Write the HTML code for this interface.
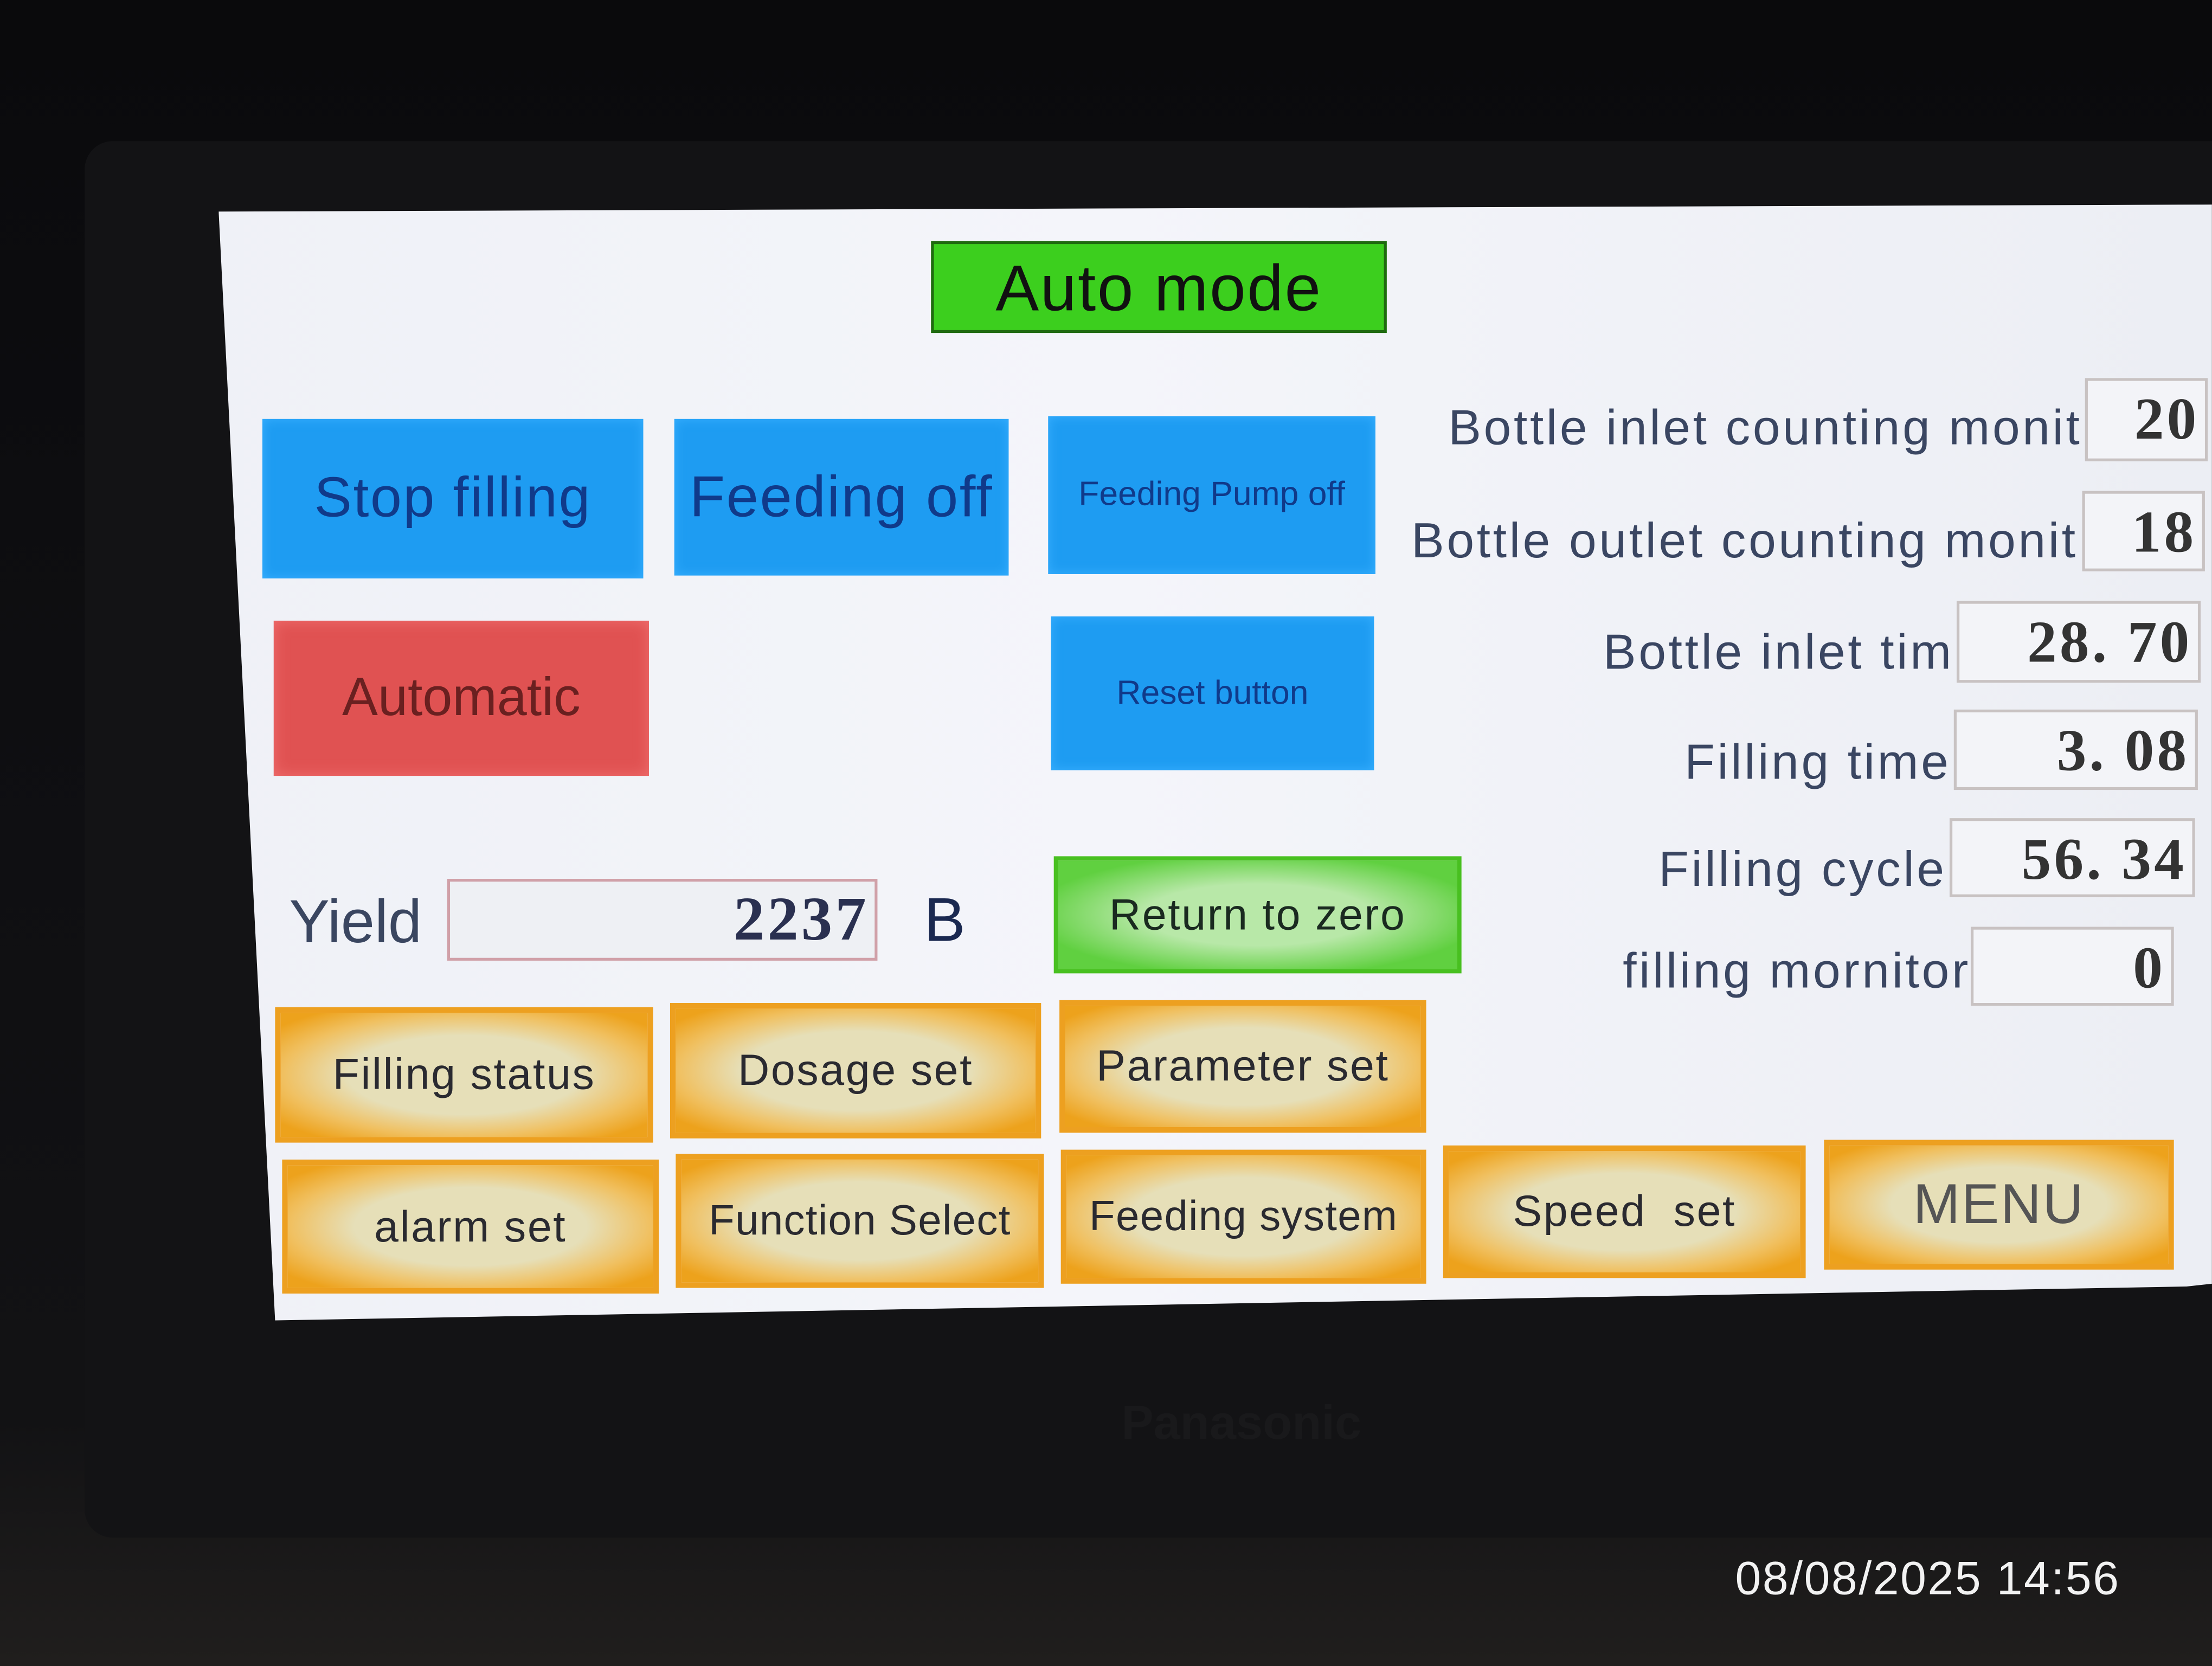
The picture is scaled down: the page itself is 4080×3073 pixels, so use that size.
<!DOCTYPE html>
<html><head><meta charset="utf-8"><style>
html,body{margin:0;padding:0;width:4080px;height:3072px;overflow:hidden;background:#0c0c0e}
#w{position:absolute;left:0;top:0;width:1568px;height:1181px;transform:scale(2.602);transform-origin:0 0;font-family:"Liberation Sans",sans-serif;
background:linear-gradient(180deg,#0a0a0c 0%,#0e0e11 40%,#121214 85%,#201e1d 100%)}
.bez{position:absolute;left:60px;top:100px;width:1540px;height:990px;background:#131315;border-radius:20px}
.scr{position:absolute;left:0;top:0;width:1568px;height:1181px;background:linear-gradient(90deg,#eef0f6,#f4f5fa 50%,#eceef4);
clip-path:polygon(155px 150px,1568px 145px,1568px 910px,1550px 912px,195px 936px)}
.a{position:absolute;box-sizing:border-box}
.bl{background:#1e9cf2;box-shadow:inset 0 0 8px #3ab0ff;color:#103a8a;display:flex;align-items:center;justify-content:center}
.or{background:radial-gradient(ellipse at center,#e6dfb8 45%,#f0c060 70%,#eda21c 90%);border:4px solid #eda020;color:#2a2a30;display:flex;align-items:center;justify-content:center;font-size:31px;letter-spacing:1px;white-space:nowrap}
.lb{position:absolute;text-align:right;color:#3a4662;font-size:35px;letter-spacing:1.8px;white-space:nowrap}
.bx{position:absolute;box-sizing:border-box;border:2px solid #c8c2c2;background:#f3f4f8;text-align:right;font-family:"Liberation Serif",serif;font-weight:bold;color:#333;font-size:42px;letter-spacing:2px;padding-right:4px;line-height:56px}
</style></head><body><div id="w">
<div class="bez"></div>
<div class="scr"></div>
<div class="a" style="left:660px;top:171px;width:323px;height:65px;background:#3ccf1e;border:2px solid #1f6a10;font-size:46px;letter-spacing:1px;color:#111;text-align:center;line-height:62px">Auto mode</div>
<div class="a bl" style="left:186px;top:297px;width:270px;height:113px;font-size:40px;letter-spacing:1px">Stop filling</div>
<div class="a bl" style="left:478px;top:297px;width:237px;height:111px;font-size:41px;letter-spacing:1px">Feeding off</div>
<div class="a bl" style="left:743px;top:295px;width:232px;height:112px;font-size:24px">Feeding Pump off</div>
<div class="a" style="left:194px;top:440px;width:266px;height:110px;background:#e05252;box-shadow:inset 0 0 10px #f07070;color:#6a2020;font-size:38px;display:flex;align-items:center;justify-content:center">Automatic</div>
<div class="a bl" style="left:745px;top:437px;width:229px;height:109px;font-size:24px">Reset button</div>
<div class="a" style="left:205px;top:630px;font-size:43px;color:#3a4660">Yield</div>
<div class="a" style="left:317px;top:623px;width:305px;height:58px;border:2px solid #d0a0a8;background:#eef0f4;text-align:right;font-family:'Liberation Serif',serif;font-weight:bold;font-size:44px;letter-spacing:2px;color:#2a3050;padding-right:4px;line-height:54px">2237</div>
<div class="a" style="left:655px;top:628px;font-size:44px;color:#1a2850">B</div>
<div class="a" style="left:747px;top:607px;width:289px;height:83px;background:radial-gradient(ellipse at center,#b8e8a8 40%,#60d040 80%);border:3px solid #48c020;font-size:31px;letter-spacing:1px;color:#1a2a20;display:flex;align-items:center;justify-content:center">Return to zero</div>
<div class="a or" style="left:195px;top:714px;width:268px;height:96px">Filling status</div>
<div class="a or" style="left:475px;top:711px;width:263px;height:96px">Dosage set</div>
<div class="a or" style="left:751px;top:709px;width:260px;height:94px">Parameter set</div>
<div class="a or" style="left:200px;top:822px;width:267px;height:95px">alarm set</div>
<div class="a or" style="left:479px;top:818px;width:261px;height:95px;font-size:30px;letter-spacing:0.5px">Function Select</div>
<div class="a or" style="left:752px;top:815px;width:259px;height:95px;font-size:30px;letter-spacing:0.5px">Feeding system</div>
<div class="a or" style="left:1023px;top:812px;width:257px;height:94px">Speed&nbsp; set</div>
<div class="a or" style="left:1293px;top:808px;width:248px;height:92px;font-size:40px;color:#555">MENU</div>
<div class="lb" style="right:92px;top:284px">Bottle inlet counting monit</div>
<div class="bx" style="left:1478px;top:268px;width:87px;height:59px">20</div>
<div class="lb" style="right:95px;top:364px">Bottle outlet counting monit</div>
<div class="bx" style="left:1476px;top:348px;width:87px;height:57px">18</div>
<div class="lb" style="right:183px;top:443px">Bottle inlet tim</div>
<div class="bx" style="left:1387px;top:426px;width:173px;height:58px">28. 70</div>
<div class="lb" style="right:185px;top:521px">Filling time</div>
<div class="bx" style="left:1385px;top:503px;width:173px;height:57px">3. 08</div>
<div class="lb" style="right:188px;top:597px">Filling cycle</div>
<div class="bx" style="left:1382px;top:580px;width:174px;height:56px">56. 34</div>
<div class="lb" style="right:171px;top:669px">filling mornitor</div>
<div class="bx" style="left:1397px;top:657px;width:144px;height:56px">0</div>
<div class="a" style="left:795px;top:990px;font-size:34px;font-weight:bold;color:#19191b">Panasonic</div>
<div class="a" style="left:1230px;top:1100px;font-size:33px;color:#f2f2f2;letter-spacing:1px">08/08/2025 14:56</div>
</div></body></html>
